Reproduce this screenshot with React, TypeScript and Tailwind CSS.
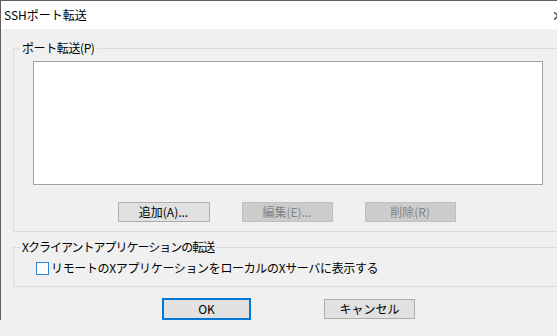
export default function App() {
  return (
    <div className="h-[336px] w-[557px] overflow-hidden bg-[#f0f0f0] text-[12px] leading-[16px] text-black [font-family:'Noto_Sans_CJK_JP','Noto_Sans',sans-serif]">
      <div className="w-[576px] border-l border-t border-[#5f5f5f]">
        {/* title bar */}
        <div className="flex h-[28px] items-center justify-between bg-white pl-[3px]">
          <span>SSHポート転送</span>
          <span className="mr-[12px] text-[14px] font-light text-[#333]">✕</span>
        </div>

        <div className="px-[12px] pt-[11px]">
          <fieldset className="border border-[#dcdcdc] pb-[9px] pt-[5px]">
            <legend className="ml-[6px] px-[2px] tracking-[-0.4px]">ポート転送(P)</legend>
            <div className="px-[19px]">
              <div className="h-[124px] w-[510px] border border-[#a0a0a0] bg-white" />
              <div className="mt-[17px] flex justify-center gap-[32px] pr-[4px]">
                <button className="h-[20px] w-[92px] border border-[#adadad] bg-[#e1e1e1]" type="button">
                  追加(A)...
                </button>
                <button className="h-[20px] w-[91px] border border-[#bfbfbf] bg-[#cccccc] text-[#838383]" disabled type="button">
                  編集(E)...
                </button>
                <button className="h-[20px] w-[91px] border border-[#bfbfbf] bg-[#cccccc] text-[#838383]" disabled type="button">
                  削除(R)
                </button>
              </div>
            </div>
          </fieldset>

          <fieldset className="mt-[7px] border border-[#dcdcdc] pb-[10px] pt-[5px]">
            <legend className="ml-[6px] px-[2px] tracking-[-1px]">Xクライアントアプリケーションの転送</legend>
            <label className="flex items-center gap-[2px] pl-[22px]">
              <span className="h-[13px] w-[13px] border border-[#2c86d6] bg-white" />
              <span className="tracking-[-0.35px]">リモートのXアプリケーションをローカルのXサーバに表示する</span>
            </label>
          </fieldset>

          <div className="mt-[11px] flex items-center justify-center gap-[73px]">
            <button className="h-[22px] w-[89px] border-2 border-[#0078d7] bg-[#e1e1e1]" type="button">
              OK
            </button>
            <button className="h-[20px] w-[91px] border border-[#adadad] bg-[#e1e1e1]" type="button">
              キャンセル
            </button>
          </div>
        </div>
      </div>
    </div>
  );
}
